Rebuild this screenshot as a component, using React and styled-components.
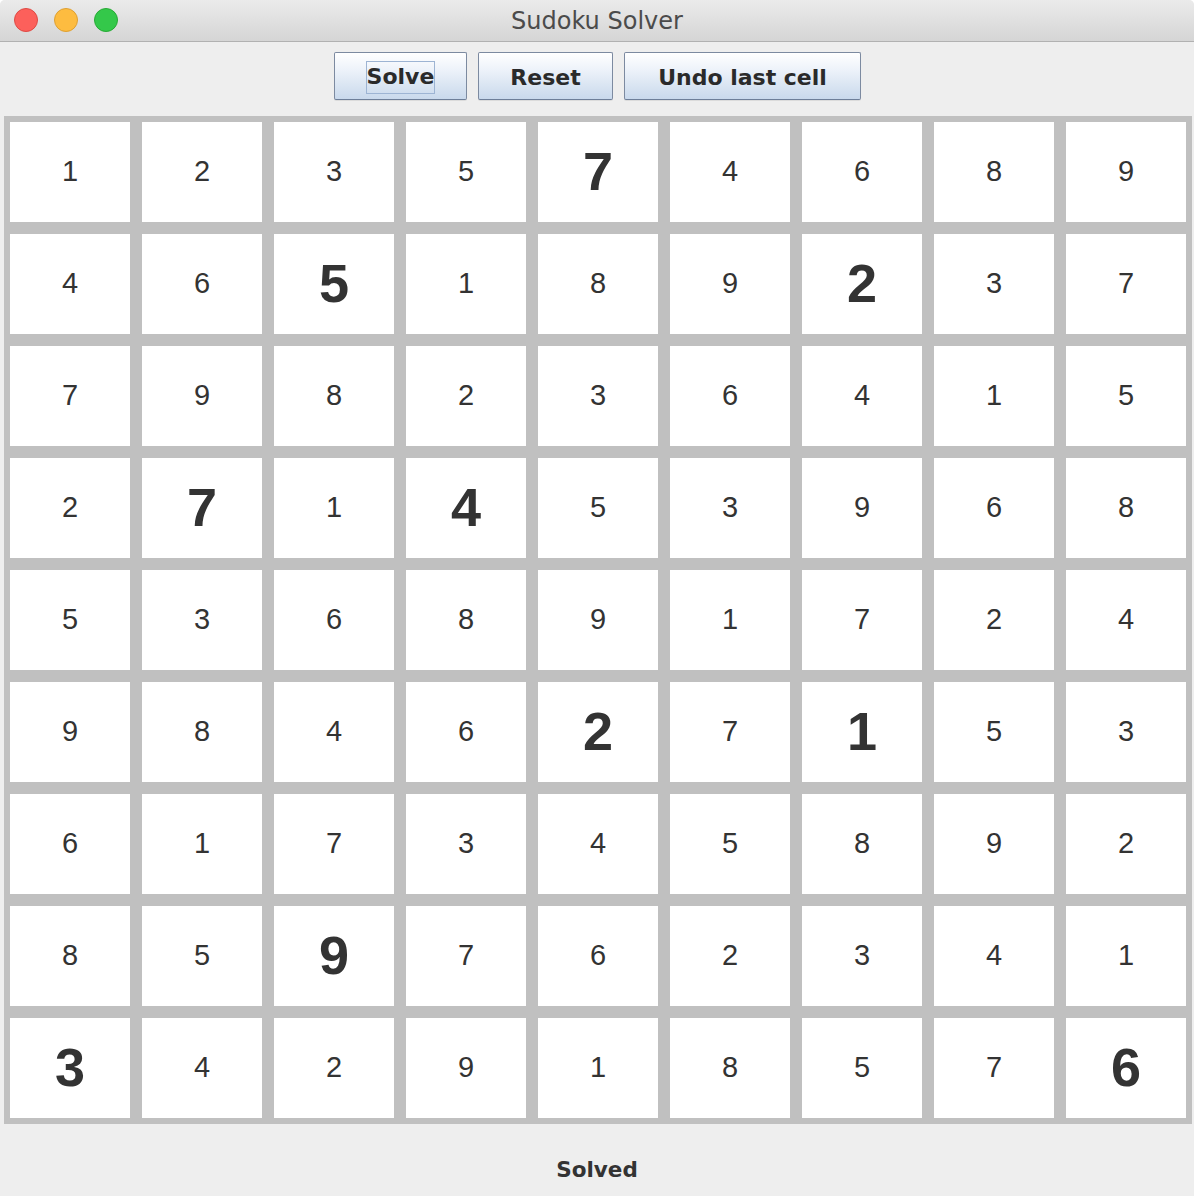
import React from "react";
import styled, { createGlobalStyle } from "styled-components";

const Global = createGlobalStyle`
  html, body { margin: 0; padding: 0; background: #ffffff; }
  body { width: 1194px; height: 1196px; overflow: hidden; }
`;

const Window = styled.div`
  width: 1194px;
  height: 1196px;
  background: #eeeeee;
  display: flex;
  flex-direction: column;
  border-radius: 5px 5px 0 0;
  overflow: hidden;
`;

const TitleBar = styled.div`
  height: 41px;
  flex: none;
  position: relative;
  display: flex;
  align-items: center;
  justify-content: center;
  background: linear-gradient(#ebebeb, #d5d5d5);
  border-bottom: 1px solid #b1b1b1;
`;

const Lights = styled.div`
  position: absolute;
  left: 14px;
  top: 8px;
  display: flex;
  gap: 16px;
`;

const Light = styled.span`
  width: 24px;
  height: 24px;
  border-radius: 50%;
  box-sizing: border-box;
  background: ${(p) => p.$bg};
  border: 1px solid ${(p) => p.$border};
`;

const Title = styled.div`
  font-family: "DejaVu Sans", "Liberation Sans", sans-serif;
  font-size: 24px;
  color: #4b4b4b;
  padding-top: 1px;
`;

const Toolbar = styled.div`
  display: flex;
  justify-content: center;
  gap: 11px;
  padding: 10px 0 16px 1px;
`;

const Button = styled.button`
  height: 48px;
  width: ${(p) => p.$w}px;
  box-sizing: border-box;
  border: 1px solid #7c8aa0;
  border-bottom-color: #6e7f99;
  border-radius: 2px;
  background: linear-gradient(#ffffff 0%, #eef3fa 35%, #c9d9ec 100%);
  font-family: "DejaVu Sans", "Liberation Sans", sans-serif;
  font-weight: bold;
  font-size: 22px;
  color: #2a2a2a;
  display: flex;
  align-items: center;
  justify-content: center;
  padding: 2px 0 0;
  box-shadow: 0 1px 0 rgba(0,0,0,0.08);
`;

const Focus = styled.span`
  border: 1px solid #9db4d3;
  padding: 1px 0 2px;
  line-height: 28px;
`;

const Board = styled.div`
  margin: 0 2px 0 4px;
  padding: 6px;
  background: #c0c0c0;
  display: grid;
  grid-template-columns: repeat(9, 120px);
  grid-auto-rows: 100px;
  gap: 12px;
`;

const Cell = styled.div`
  background: #ffffff;
  display: flex;
  align-items: center;
  justify-content: center;
  padding-bottom: 2px;
  font-family: "Liberation Sans", Arial, sans-serif;
  color: #333333;
  font-size: ${(p) => (p.$given ? "54px" : "29px")};
  font-weight: ${(p) => (p.$given ? "bold" : "normal")};
  line-height: 1;
`;

const Status = styled.div`
  flex: 1;
  display: flex;
  align-items: center;
  justify-content: center;
  padding-top: 18px;
  font-family: "DejaVu Sans", "Liberation Sans", sans-serif;
  font-weight: bold;
  font-size: 21.5px;
  color: #333333;
`;

const grid = [
  "123574689",
  "465189237",
  "798236415",
  "271453968",
  "536891724",
  "984627153",
  "617345892",
  "859762341",
  "342918576",
];

const givens = new Set([
  "0-4", "1-2", "1-6", "3-1", "3-3", "5-4", "5-6", "7-2", "8-0", "8-8",
]);

export default function App() {
  return (
    <>
      <Global />
      <Window>
        <TitleBar>
          <Lights>
            <Light $bg="#fc605b" $border="#de4a44" />
            <Light $bg="#fdbc40" $border="#dea032" />
            <Light $bg="#34c84a" $border="#27aa35" />
          </Lights>
          <Title>Sudoku Solver</Title>
        </TitleBar>
        <Toolbar>
          <Button $w={133}><Focus>Solve</Focus></Button>
          <Button $w={135}>Reset</Button>
          <Button $w={237}>Undo last cell</Button>
        </Toolbar>
        <Board>
          {grid.map((row, r) =>
            row.split("").map((d, c) => (
              <Cell key={`${r}-${c}`} $given={givens.has(`${r}-${c}`)}>
                {d}
              </Cell>
            ))
          )}
        </Board>
        <Status>Solved</Status>
      </Window>
    </>
  );
}
